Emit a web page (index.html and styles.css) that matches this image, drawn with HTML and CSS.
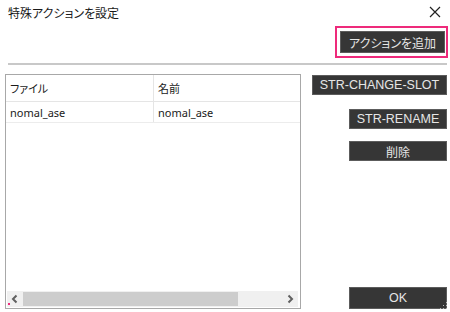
FILE: index.html
```html
<!DOCTYPE html>
<html lang="ja">
<head>
  <meta charset="UTF-8" />
  <meta name="viewport" content="width=device-width, initial-scale=1.0"/>
  <title>特殊アクションを設定</title>
  <link rel="stylesheet" href="styles.css">
</head>
<body>
  <div class="dialog">
    <!-- Title bar -->
    <div class="titlebar">
      <span class="title">特殊アクションを設定</span>
      <svg class="close" width="12" height="12" viewBox="0 0 12 12">
        <path d="M1 1 L11 11 M11 1 L1 11" stroke="#222" stroke-width="1.2" fill="none"/>
      </svg>
    </div>

    <!-- Add action -->
    <div class="top-actions">
      <div class="highlight">
        <button class="btn btn-add">アクションを追加</button>
      </div>
    </div>
    <div class="separator"></div>

    <!-- Main -->
    <div class="main">
      <div class="list">
        <div class="list-head">
          <div class="cell col-file">ファイル</div>
          <div class="cell col-name">名前</div>
        </div>
        <div class="list-row">
          <div class="cell col-file">nomal_ase</div>
          <div class="cell col-name">nomal_ase</div>
        </div>
        <div class="list-body"></div>
        <div class="hscroll">
          <svg class="arrow" width="16" height="16" viewBox="0 0 16 16">
            <path d="M9.5 4.5 L6 8 L9.5 11.5" stroke="#606060" stroke-width="2" fill="none"/>
          </svg>
          <div class="track"><div class="thumb"></div></div>
          <svg class="arrow" width="16" height="16" viewBox="0 0 16 16">
            <path d="M6.5 4.5 L10 8 L6.5 11.5" stroke="#606060" stroke-width="2" fill="none"/>
          </svg>
        </div>
        <span class="focus-dot"></span>
      </div>

      <div class="side">
        <button class="btn btn-wide">STR-CHANGE-SLOT</button>
        <button class="btn btn-side">STR-RENAME</button>
        <button class="btn btn-side btn-jp">削除</button>
        <button class="btn btn-side btn-ok">OK</button>
      </div>
    </div>

    <svg class="grip" width="8" height="8" viewBox="0 0 8 8">
      <rect x="6" y="0" width="1" height="1" fill="#bbb"/>
      <rect x="3" y="3" width="1" height="1" fill="#bbb"/>
      <rect x="6" y="3" width="1" height="1" fill="#bbb"/>
      <rect x="0" y="6" width="1" height="1" fill="#bbb"/>
      <rect x="3" y="6" width="1" height="1" fill="#bbb"/>
      <rect x="6" y="6" width="1" height="1" fill="#bbb"/>
    </svg>
  </div>
</body>
</html>
```

FILE: styles.css
```css
body {
  margin: 0;
  padding: 0;
  background-color: white;
  font-family: "Noto Sans", "Noto Sans CJK JP", sans-serif;
  font-size: 12px;
  color: #1a1a1a;
}

.dialog {
  position: relative;
  width: 450px;
  height: 312px;
  overflow: hidden;
}

.titlebar {
  display: flex;
  justify-content: space-between;
  align-items: center;
  height: 24px;
  padding: 0 8px 0 8px;
}

.title {
  font-family: "Noto Sans CJK JP", sans-serif;
  font-size: 12px;
  font-feature-settings: "palt";
}

.close {
  margin-right: 1px;
}

.top-actions {
  display: flex;
  justify-content: flex-end;
  padding-right: 2px;
  margin-top: 2px;
}

.highlight {
  border: 2px solid #ee2a7b;
  padding: 3px 1px 3px 3px;
}

.btn {
  display: flex;
  align-items: center;
  justify-content: center;
  background-color: #363636;
  border: 1px solid #5c5c5c;
  color: #e6e6e6;
  font-family: "Liberation Sans", "Noto Sans CJK JP", sans-serif;
  font-size: 12.5px;
  padding: 0;
  cursor: pointer;
}

.btn-add {
  width: 105px;
  height: 22px;
  font-family: "Noto Sans CJK JP", sans-serif;
  font-size: 12px;
  font-feature-settings: "palt";
}

.separator {
  height: 2px;
  background-color: #c8c8c8;
  margin: 5px 3px 0 8px;
}

.main {
  display: flex;
  align-items: stretch;
  padding-left: 5px;
  margin-top: 9px;
  height: 235px;
}

.list {
  position: relative;
  display: flex;
  flex-direction: column;
  width: 294px;
  border: 1px solid #a8a8a8;
  font-family: "Noto Sans", "Noto Sans CJK JP", sans-serif;
  font-size: 11px;
  font-feature-settings: "palt";
}

.list-head,
.list-row {
  display: flex;
}

.list-head {
  height: 26px;
  border-bottom: 1px solid #e5e5e5;
}

.list-row {
  height: 20px;
  border-bottom: 1px solid #ececec;
}

.cell {
  display: flex;
  align-items: center;
  padding-left: 4px;
}

.col-file {
  width: 143px;
  border-right: 1px solid #e5e5e5;
}

.col-name {
  flex: 1;
}

.list-head .cell {
  font-family: "Noto Sans CJK JP", sans-serif;
  font-size: 11px;
}

.list-body {
  flex: 1;
}

.hscroll {
  display: flex;
  align-items: center;
  height: 16px;
  background-color: #f0f0f0;
  margin: 0 2px 1px 1px;
}

.arrow {
  flex: none;
}

.track {
  flex: 1;
  height: 100%;
  display: flex;
  align-items: center;
}

.thumb {
  width: 215px;
  height: 14px;
  background-color: #cdcdcd;
}

.focus-dot {
  position: absolute;
  left: 2px;
  bottom: 3px;
  width: 2px;
  height: 2px;
  background-color: #ee2a7b;
}

.side {
  display: flex;
  flex-direction: column;
  align-items: flex-end;
  width: 135px;
  margin-left: 11px;
  padding-top: 1px;
}

.btn-wide {
  width: 135px;
  height: 20px;
  margin-bottom: 14px;
}

.btn-side {
  width: 98px;
  height: 20px;
  margin-bottom: 12px;
}

.btn-jp {
  font-family: "Noto Sans CJK JP", sans-serif;
  font-size: 12px;
}

.btn-ok {
  margin-top: auto;
  margin-bottom: 0;
  height: 22px;
}

.grip {
  position: absolute;
  right: 2px;
  bottom: 2px;
}
```
